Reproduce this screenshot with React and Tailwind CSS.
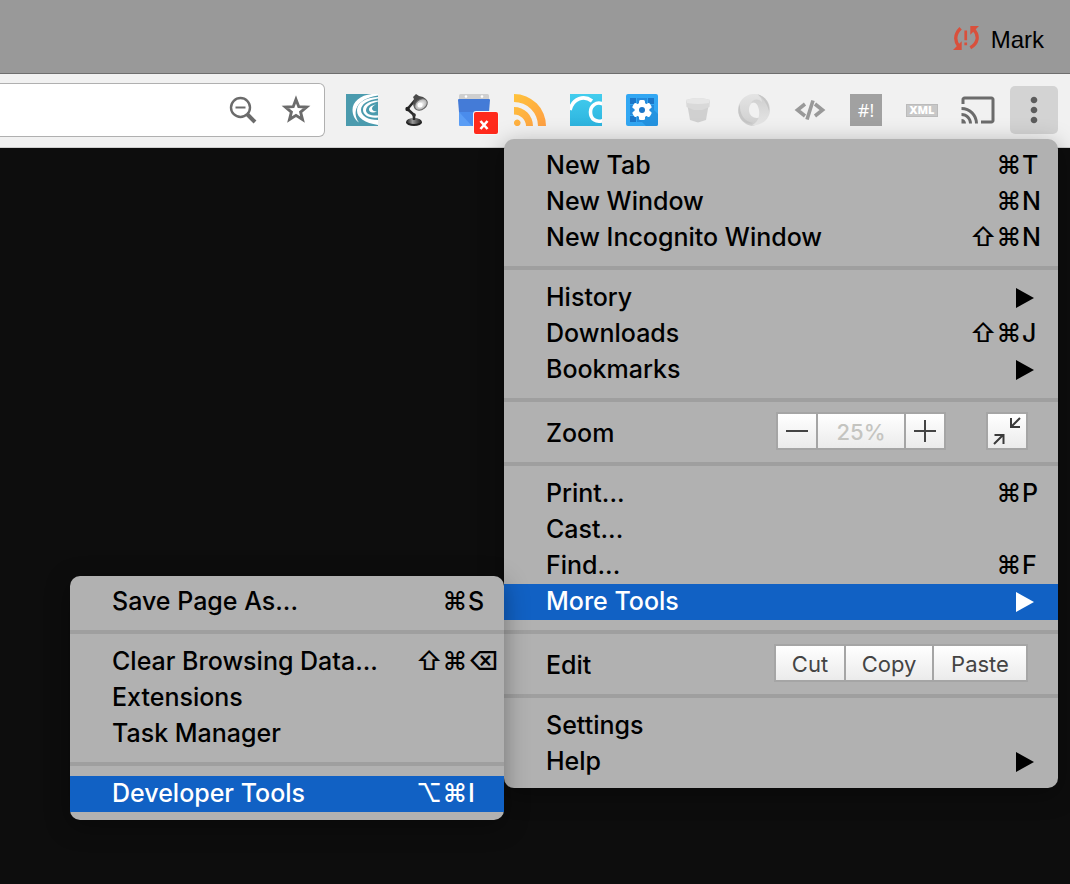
import React from "react";
import { MdMoreVert, MdCast } from "react-icons/md";

function Shortcut({ modifiers, letter }) {
  return (
    <span className="flex items-center pb-0.5">
      {modifiers.map((m) => (
        <span key={m} className="w-[26px] shrink-0 text-center">{m}</span>
      ))}
      <span className="w-9 text-left">{letter}</span>
    </span>
  );
}

function Arrow() {
  return (
    <svg className="mr-6 h-5 w-[18px]" viewBox="0 0 18 20" aria-hidden="true">
      <path d="M0 0L18 10L0 20Z" fill="currentColor" />
    </svg>
  );
}

function Item({ label, modifiers, letter, submenu, active }) {
  return (
    <button
      type="button"
      role="menuitem"
      className={
        active
          ? "flex h-9 w-full items-center justify-between bg-[#1161c4] pl-[42px] text-left leading-[34px] text-white"
          : "flex h-9 w-full items-center justify-between pl-[42px] text-left leading-[34px] text-black"
      }
    >
      <span className="pb-0.5">{label}</span>
      {modifiers && <Shortcut modifiers={modifiers} letter={letter} />}
      {submenu && <Arrow />}
    </button>
  );
}

function Separator() {
  return <div role="separator" className="my-2.5 h-1 bg-[#9f9f9f]" />;
}

const menuPanel =
  "absolute rounded-[10px] bg-[#b1b1b1] font-[Inter,'DejaVu_Sans',sans-serif] text-[25px] font-medium whitespace-nowrap shadow-[0_6px_24px_rgba(0,0,0,0.35)]";
const cell = "flex h-[34px] items-center justify-center bg-linear-to-b from-white to-[#ebebeb]";
const group = "flex divide-x-2 divide-[#a5a5a5] border-2 border-[#a5a5a5] text-[22px] text-[#444]";

function ToolsSubmenu() {
  return (
    <div role="menu" aria-label="More Tools" className={`${menuPanel} -top-2 right-full w-[434px] py-2`}>
      <Item label="Save Page As..." modifiers={["⌘"]} letter="S" />
      <Separator />
      <Item label="Clear Browsing Data..." modifiers={["⇧", "⌘"]} letter="⌫" />
      <Item label="Extensions" />
      <Item label="Task Manager" />
      <Separator />
      <Item label="Developer Tools" modifiers={["⌥", "⌘"]} letter="I" active />
    </div>
  );
}

function MainMenu() {
  return (
    <div role="menu" aria-label="Browser menu" className={`${menuPanel} top-[139px] right-3 w-[554px] pt-[9px] pb-2`}>
      <Item label="New Tab" modifiers={["⌘"]} letter="T" />
      <Item label="New Window" modifiers={["⌘"]} letter="N" />
      <Item label="New Incognito Window" modifiers={["⇧", "⌘"]} letter="N" />
      <Separator />
      <Item label="History" submenu />
      <Item label="Downloads" modifiers={["⇧", "⌘"]} letter="J" />
      <Item label="Bookmarks" submenu />
      <Separator />
      <div className="flex h-10 items-start pr-[30px] pl-[42px]">
        <span className="flex-1 leading-[42px]">Zoom</span>
        <div className={group}>
          <button type="button" aria-label="Zoom out" className={`${cell} w-10`}>
            <svg className="size-[22px]" viewBox="0 0 22 22"><path d="M0 11H22" stroke="currentColor" strokeWidth="2" /></svg>
          </button>
          <span className={`${cell} w-[88px] pt-0.5 text-[#c4c4c0]`}>25%</span>
          <button type="button" aria-label="Zoom in" className={`${cell} w-[38px]`}>
            <svg className="size-[22px]" viewBox="0 0 22 22"><path d="M0 11H22M11 0V22" stroke="currentColor" strokeWidth="2" /></svg>
          </button>
        </div>
        <div className={`${group} ml-10`}>
          <button type="button" aria-label="Exit full screen" className={`${cell} w-[38px]`}>
            <svg className="size-[30px]" viewBox="0 0 30 30" fill="none" stroke="#3a3a3a" strokeWidth="2">
              <path d="M28 2L19.500 10.500M19 2V11H28M2 28L10.500 19.500M2.500 19H11.500V28" />
            </svg>
          </button>
        </div>
      </div>
      <Separator />
      <Item label="Print..." modifiers={["⌘"]} letter="P" />
      <Item label="Cast..." />
      <Item label="Find..." modifiers={["⌘"]} letter="F" />
      <div className="relative">
        <Item label="More Tools" submenu active />
        <ToolsSubmenu />
      </div>
      <Separator />
      <div className="flex h-10 items-start pr-[30px] pl-[42px]">
        <span className="flex-1 leading-[42px]">Edit</span>
        <div className={`${group} font-normal`}>
          <button type="button" className={`${cell} w-[70px] pt-0.5`}>Cut</button>
          <button type="button" className={`${cell} w-[88px] pt-0.5`}>Copy</button>
          <button type="button" className={`${cell} w-[92px] pt-0.5`}>Paste</button>
        </div>
      </div>
      <Separator />
      <Item label="Settings" />
      <Item label="Help" submenu />
    </div>
  );
}

function SyncProblem() {
  return (
    <svg viewBox="0 0 24 22" className="mb-1 h-6 w-[26px] text-[#d9503c]" fill="currentColor">
      <path d="M8 1C3 6 2 12 6.500 18" fill="none" stroke="currentColor" strokeWidth="3" transform="translate(-1 1)" />
      <path d="M0 22H8V14Z" />
      <path d="M16 21C23 17 24.500 10 19 4" fill="none" stroke="currentColor" strokeWidth="3" transform="translate(0 -1)" />
      <path d="M24 0H16V8Z" />
      <path d="M10.500 4H13V13H10.500ZM10.500 15.200H13V17.700H10.500Z" />
    </svg>
  );
}

function Swirl() {
  return (
    <svg viewBox="0 0 32 32" className="size-8">
      <rect width="32" height="32" fill="#4b9bae" />
      <path d="M32 0H26C14 1 6.500 8 6.500 16C6.500 21 9 26 13 28.500C6 19 9 5 32 1.500Z" fill="#fff" />
      <path d="M32 3C19 3.500 11 9 11 16.500C11 24 19 29 32 31V26C22 26 15 22 15 16C15 10 22 6 32 4.500Z" fill="#fff" />
      <path d="M32 6.500C23 7 17 10.500 17 16C17 21 23 24.500 32 23.500V21.500C25 22 20 20 20 16.500C20 12 25 9 32 7.500Z" fill="#fff" />
      <path d="M30 10.500C26 11 23 13 23 15.500C23 18.500 27 19.500 31 17.500C28 17.500 26 16.500 26 14.500C26 13 27.500 11.500 30 10.500Z" fill="#fff" />
    </svg>
  );
}

function Lamp() {
  return (
    <svg viewBox="0 0 32 32" className="size-8">
      <defs>
        <radialGradient id="shade"><stop offset="0" stopColor="#fff" /><stop offset="1" stopColor="#aaa" /></radialGradient>
        <linearGradient id="base"><stop stopColor="#222" /><stop offset=".4" stopColor="#999" /><stop offset="1" stopColor="#222" /></linearGradient>
      </defs>
      <ellipse cx="12" cy="28.300" rx="8" ry="3.700" fill="#222" />
      <ellipse cx="12" cy="27" rx="7.500" ry="3" fill="url(#base)" />
      <path d="M12 26V21L5.500 15L14 5" fill="none" stroke="#2a2a2a" strokeWidth="2.600" strokeLinejoin="round" />
      <circle cx="12" cy="21" r="1.800" fill="#333" />
      <circle cx="5.500" cy="15" r="2.200" fill="#222" />
      <path d="M11 3L14 0L17 2L21 3Q27 6 24 12Q19 18 13 15Q10 11 12 5Z" fill="#4a4a4a" />
      <ellipse cx="19" cy="10.500" rx="7" ry="5" transform="rotate(-38 19 10.500)" fill="url(#shade)" stroke="#666" />
      <circle cx="18" cy="11" r="2.500" fill="#fff" />
    </svg>
  );
}

function Calendar() {
  return (
    <span className="relative block size-8">
      <svg viewBox="0 0 32 32" className="size-8">
        <rect x="1" y="0" width="30" height="8" rx="1.500" fill="#cfcfcf" />
        <circle cx="8" cy="2.500" r="1.300" fill="#fff" /><circle cx="24" cy="2.500" r="1.300" fill="#fff" />
        <path d="M1 16H31V31Q31 32 30 32H2Q1 32 1 31Z" fill="#5a9df5" />
        <path d="M1 18L14 32H30V17Z" fill="#4a8cec" />
        <path d="M1 5H31Q32 5 32 6L31 18H1L0 6Q0 5 1 5Z" fill="#447bd7" />
      </svg>
      <span className="absolute top-[18px] left-4 flex h-[22px] w-6 items-center justify-center rounded-[2px] bg-[#ff2a1c] pr-1 shadow-[0_0_0_1px_#f7f7f7]">
        <svg viewBox="0 0 10 10" className="mt-1 size-2.5"><path d="M1.500 1L8.500 9M8.500 1L1.500 9" stroke="#fff" strokeWidth="2.600" /></svg>
      </span>
    </span>
  );
}

function Feed() {
  return (
    <svg viewBox="0 0 32 32" className="size-8">
      <defs><linearGradient id="feed" x2="1" y2="1"><stop stopColor="#ffc33c" /><stop offset="1" stopColor="#ff9f43" /></linearGradient></defs>
      <path d="M0 0A32 32 0 0 1 32 32H24A24 24 0 0 0 0 8ZM0 13A19 19 0 0 1 19 32H12A12 12 0 0 0 0 20.500ZM3.300 25.500A3.300 3.300 0 1 1 3.200 25.500Z" fill="url(#feed)" />
    </svg>
  );
}

function Loops() {
  return (
    <svg viewBox="0 0 32 32" className="size-8">
      <defs><linearGradient id="loops" y2="1" x2="0"><stop stopColor="#43cdee" /><stop offset="1" stopColor="#2db4df" /></linearGradient></defs>
      <rect width="32" height="32" fill="url(#loops)" />
      <g fill="none" stroke="#fff" strokeWidth="3.600"><path d="M0 16C3 4 14 1 22 7" /><path d="M33 10C26 7 20.500 12 20.500 18C20.500 25 26 29 33 26.500" /></g>
    </svg>
  );
}

function Gear() {
  return (
    <svg viewBox="0 0 32 32" className="size-8">
      <rect width="32" height="32" rx="2" fill="#32a7f3" />
      <path d="M4 4H10V10H4ZM22 4H28V10H22ZM4 22H10V28H4ZM22 22H28V28H22Z" fill="#1b76c8" />
      <path d="M11 4H21V28H11ZM4 11H28V21H4Z" fill="#258bdc" />
      <path d="M22 23L14 26L20 32H30Q32 32 32 30V20L26 14Z" fill="#2493e0" />
      <g fill="#fff">
        <circle cx="16" cy="16" r="7.500" />
        <rect x="13" y="6" width="6" height="20" rx="1.500" />
        <rect x="13" y="6" width="6" height="20" rx="1.500" transform="rotate(60 16 16)" />
        <rect x="13" y="6" width="6" height="20" rx="1.500" transform="rotate(120 16 16)" />
      </g>
      <circle cx="16" cy="16" r="3" fill="#1b76c8" />
    </svg>
  );
}

function Bucket() {
  return (
    <svg viewBox="0 0 32 32" className="size-8">
      <path d="M5 9L8 26L16 28.500L24 26L27 9Z" fill="#d0d0d0" />
      <path d="M4 6Q16 2 28 6L27.500 13L20 16H12L4.500 13Z" fill="#d9d9d9" />
      <path d="M4 6Q16 2 28 6L27 9Q16 11 5 9Z" fill="#e6e6e6" />
    </svg>
  );
}

function Ring() {
  return (
    <svg viewBox="0 0 32 32" className="size-8">
      <defs>
        <linearGradient id="ringLeft" x2="0" y2="1"><stop stopColor="#e4e4e4" /><stop offset="1" stopColor="#cfcfcf" /></linearGradient>
        <linearGradient id="ringRight" x2="0" y2="1"><stop stopColor="#cdcdcd" /><stop offset="1" stopColor="#e6e6e6" /></linearGradient>
      </defs>
      <path d="M18 0C8 -1 0 7 0 16C0 24 6 31 14 32C20 31 24 27 24 22C20 26 11 24 11 16C11 11 14 7.500 18 8C22 8 24 12 24 16L27 12C27 6 23 2 18 0Z" fill="url(#ringLeft)" />
      <path d="M18 0C26 1 32 8 32 16C32 25 24 32 13 31.500C19 29 22 24 21 16C20 10 17 7 13 9C15 5 20 4 24 8C24 4 21 1 18 0Z" fill="url(#ringRight)" />
      <path d="M2 10C1 20 7 28 15 29C10 31 4 28 1.500 22C0 18 0 14 2 10Z" fill="#c6c6c6" />
      <path d="M20 0.500C28 3 32 10 31 17C29 10 26 5 20 0.500Z" fill="#c6c6c6" />
    </svg>
  );
}

function Code() {
  return (
    <svg viewBox="0 0 32 32" className="size-8" fill="none" stroke="#999" strokeWidth="3.600">
      <path d="M11 10L3.500 16L11 22M21 10L28.500 16L21 22M19 6.500L13 25.500" />
    </svg>
  );
}

function ZoomOutIcon() {
  return (
    <svg viewBox="0 0 28 28" className="size-7" fill="none" stroke="currentColor">
      <circle cx="11.500" cy="11.500" r="9.500" strokeWidth="2.400" />
      <path d="M6.500 11.500H16.500" strokeWidth="2" />
      <path d="M18 18L26 26" strokeWidth="4" />
    </svg>
  );
}

function StarIcon() {
  return (
    <svg viewBox="1 1 28 28" className="size-[30px]" fill="none" stroke="currentColor" strokeWidth="2.700" strokeMiterlimit="10">
      <path d="M15 5.100L17.600 11.900L24.900 12.300L19.300 16.900L21.100 23.900L15 20L8.900 23.900L10.700 16.900L5.100 12.300L12.400 11.900Z" />
    </svg>
  );
}

const extensions = [
  ["Swirl", <Swirl />],
  ["Lamp", <Lamp />],
  ["Calendar", <Calendar />],
  ["Feed", <Feed />],
  ["Loops", <Loops />],
  ["Settings", <Gear />],
  ["Bucket", <Bucket />],
  ["Ring", <Ring />],
  ["Source", <Code />],
  ["Hashbang", <span className="flex size-8 items-center justify-center bg-[#a1a1a1] font-['Open_Sans',sans-serif] text-lg text-white">#!</span>],
  ["XML", <span className="flex h-[13px] w-8 items-center justify-center border border-[#bbb] bg-[#c8c8c8] font-['Open_Sans',sans-serif] text-[11px] font-extrabold text-white">XML</span>],
  ["Cast", <MdCast className="-mx-0.5 size-9 shrink-0 text-[#6b6b6b]" />],
];

export default function App() {
  return (
    <div className="relative flex min-h-screen flex-col overflow-hidden bg-[#0d0d0d]">
      <header className="flex h-[74px] items-center justify-end border-b border-[#6e6e6e] bg-[#999] pt-1.5 pr-[26px]">
        <button type="button" className="flex items-center gap-3 font-['Liberation_Sans',Arial,sans-serif] text-2xl text-black">
          <SyncProblem />
          Mark
        </button>
      </header>
      <div className="flex items-center border-b border-[#cfcfcf] bg-[#f1f1f1] pt-[9px] pr-3 pb-2.5">
        <div className="flex h-[54px] min-w-0 flex-1 items-center rounded-r-[6px] border border-l-0 border-[#b0b0b0] bg-white pr-[13px]">
          <input aria-label="Address" className="h-full min-w-0 flex-1 outline-none" />
          <button type="button" aria-label="Zoom level" className="shrink-0 text-[#6b6b6b]"><ZoomOutIcon /></button>
          <button type="button" aria-label="Bookmark this page" className="ml-6 shrink-0 text-[#6b6b6b]"><StarIcon /></button>
        </div>
        <div className="ml-[21px] flex shrink-0 items-center gap-6">
          {extensions.map(([name, icon]) => (
            <button key={name} type="button" aria-label={name} className="flex size-8 items-center justify-center">{icon}</button>
          ))}
        </div>
        <button type="button" aria-label="Menu" className="ml-4 flex size-12 shrink-0 items-center justify-center rounded-[5px] bg-[#d3d3d3] text-[#5c5c5c]">
          <MdMoreVert className="size-10" />
        </button>
      </div>
      <main className="flex-1 bg-[#0d0d0d]" />
      <MainMenu />
    </div>
  );
}
